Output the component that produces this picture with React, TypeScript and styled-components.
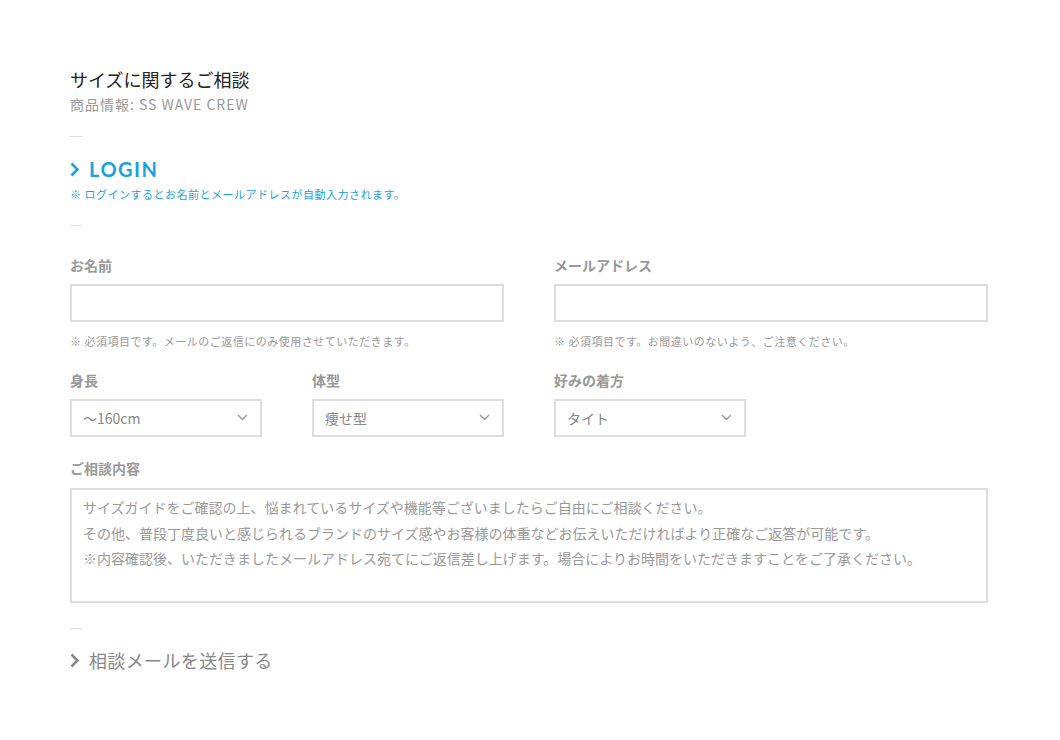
import React from 'react'
import styled, { createGlobalStyle } from 'styled-components'

const JP = `"Noto Sans CJK JP", "Noto Sans", sans-serif`

const GlobalStyle = createGlobalStyle`
    body {
        margin: 0;
        background: #fff;
        font-family: ${JP};
    }
`

const heights = ['〜160cm', '161〜170cm', '171〜180cm', '181cm〜']
const bodies = ['痩せ型', '普通', 'がっちり']
const fits = ['タイト', 'ジャスト', 'ゆったり']

const messageLines = [
    'サイズガイドをご確認の上、悩まれているサイズや機能等ございましたらご自由にご相談ください。',
    'その他、普段丁度良いと感じられるブランドのサイズ感やお客様の体重などお伝えいただければより正確なご返答が可能です。',
    '※内容確認後、いただきましたメールアドレス宛てにご返信差し上げます。場合によりお時間をいただきますことをご了承ください。',
]

function Chevron({ color }: { color: string }) {
    return (
        <svg width="9" height="15" viewBox="0 0 9 15">
            <polyline points="1.5,1.5 7.5,7.5 1.5,13.5" fill="none" stroke={color} strokeWidth="2.6" />
        </svg>
    )
}

function SelectBox({ options }: { options: string[] }) {
    return (
        <SelectWrap>
            <Select defaultValue={options[0]}>
                {options.map(o => <option key={o}>{o}</option>)}
            </Select>
            <Caret width="11" height="7" viewBox="0 0 11 7">
                <polyline points="1,1 5.5,5.5 10,1" fill="none" stroke="#999" strokeWidth="1.4" />
            </Caret>
        </SelectWrap>
    )
}

export default function App() {
    return (
        <>
            <GlobalStyle />
            <Page>
                <Title>サイズに関するご相談</Title>
                <SubTitle>商品情報: SS WAVE CREW</SubTitle>
                <Dash $top={22} />

                <LinkRow $color="#1ba1e0">
                    <Chevron color="#1ba1e0" />
                    <LoginText>LOGIN</LoginText>
                </LinkRow>
                <LoginNote>※ ログインするとお名前とメールアドレスが自動入力されます。</LoginNote>
                <Dash $top={23} />

                <FormGrid>
                    <Field $span={2}>
                        <Label>お名前</Label>
                        <TextInput type="text" />
                        <Note>※ 必須項目です。メールのご返信にのみ使用させていただきます。</Note>
                    </Field>
                    <Field $span={2}>
                        <Label>メールアドレス</Label>
                        <TextInput type="email" />
                        <Note>※ 必須項目です。お間違いのないよう、ご注意ください。</Note>
                    </Field>

                    <Field $span={1}>
                        <Label>身長</Label>
                        <SelectBox options={heights} />
                    </Field>
                    <Field $span={1}>
                        <Label>体型</Label>
                        <SelectBox options={bodies} />
                    </Field>
                    <Field $span={1}>
                        <Label>好みの着方</Label>
                        <SelectBox options={fits} />
                    </Field>
                    <div />

                    <Field $span={4}>
                        <Label $gap={10}>ご相談内容</Label>
                        <Message placeholder={messageLines.join('\n')} />
                    </Field>
                </FormGrid>

                <Dash $top={25} />
                <LinkRow $color="#888" $top={17}>
                    <Chevron color="#888" />
                    <SubmitText>相談メールを送信する</SubmitText>
                </LinkRow>
            </Page>
        </>
    )
}

const Page = styled.div`
    width: 918px;
    padding: 67px 0 40px 70px;
`
const Title = styled.h1`
    margin: 0;
    font-size: 18px;
    line-height: 24px;
    font-weight: 400;
    color: #222;
`
const SubTitle = styled.p`
    margin: 3px 0 0;
    font-size: 14px;
    line-height: 20px;
    color: #999;
    letter-spacing: 0.07em;
`
const Dash = styled.hr<{ $top: number }>`
    margin: ${p => p.$top}px 0 0;
    width: 12px;
    height: 0;
    border: 0;
    border-top: 1px solid #ddd;
`
const LinkRow = styled.a<{ $color: string; $top?: number }>`
    display: flex;
    align-items: center;
    gap: 10px;
    margin-top: ${p => p.$top ?? 18}px;
    height: 28px;
    color: ${p => p.$color};
    text-decoration: none;
    cursor: pointer;
`
const LoginText = styled.span`
    font-family: Lato, "Noto Sans", sans-serif;
    font-weight: 700;
    font-size: 20px;
    letter-spacing: 1.5px;
`
const SubmitText = styled.span`
    font-size: 18px;
    letter-spacing: 0.02em;
`
const LoginNote = styled.p`
    margin: 3px 0 0;
    font-size: 11px;
    line-height: 16px;
    letter-spacing: 0.5px;
    color: #1ba1e0;
`
const FormGrid = styled.div`
    display: grid;
    grid-template-columns: repeat(4, 1fr);
    column-gap: 50px;
    row-gap: 21px;
    margin-top: 29px;
`
const Field = styled.div<{ $span: number }>`
    grid-column: span ${p => p.$span};
    display: flex;
    flex-direction: column;
`
const Label = styled.label<{ $gap?: number }>`
    font-size: 14px;
    line-height: 20px;
    font-weight: 700;
    color: #999;
    margin-bottom: ${p => p.$gap ?? 9}px;
`
const TextInput = styled.input`
    box-sizing: border-box;
    height: 38px;
    border: 2px solid #ddd;
    border-radius: 0;
    padding: 0 11px;
    font-family: ${JP};
    font-size: 14px;
    color: #888;
    outline: none;
`
const Note = styled.p`
    margin: 11px 0 0;
    font-size: 11px;
    line-height: 16px;
    letter-spacing: 0.5px;
    color: #999;
`
const SelectWrap = styled.div`
    position: relative;
    height: 38px;
`
const Select = styled.select`
    box-sizing: border-box;
    width: 100%;
    height: 38px;
    appearance: none;
    border: 2px solid #ddd;
    border-radius: 0;
    background: #fff;
    padding: 0 11px;
    font-family: ${JP};
    font-size: 14px;
    color: #888;
    outline: none;
`
const Caret = styled.svg`
    position: absolute;
    right: 14px;
    top: 15px;
    pointer-events: none;
`
const Message = styled.textarea`
    box-sizing: border-box;
    height: 115px;
    border: 2px solid #ddd;
    border-radius: 0;
    padding: 5px 11px;
    font-family: ${JP};
    font-size: 14px;
    line-height: 25.5px;
    color: #888;
    resize: none;
    outline: none;

    &::placeholder {
        color: #999;
        opacity: 1;
    }
`
